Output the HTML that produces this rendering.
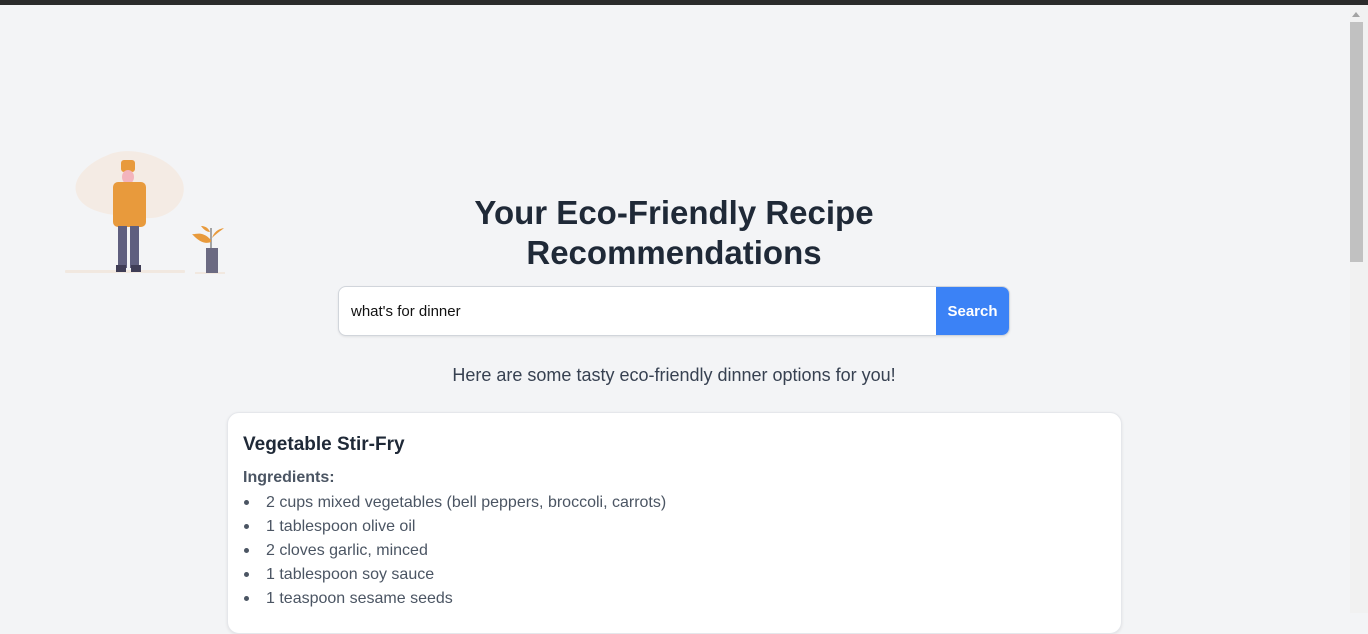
<!DOCTYPE html>
<html><head><meta charset="utf-8"><style>
body{margin:0;width:1368px;height:613px;overflow:hidden;background:#f3f4f6;font-family:"Liberation Sans",sans-serif;position:relative}
.top{position:absolute;left:0;top:0;width:1368px;height:5px;background:#2b2b2b}
.sb{position:absolute;right:0;top:5px;width:18px;height:608px;background:#f1f1f1}
.thumb{position:absolute;left:1350px;top:22px;width:13px;height:240px;background:#c1c1c1}
.arrow{position:absolute;left:1352px;top:12px;width:0;height:0;border-left:4px solid transparent;border-right:4px solid transparent;border-bottom:5px solid #a3a3a3}
h1{position:absolute;left:300px;width:748px;top:193px;margin:0;text-align:center;font-size:33px;line-height:40px;font-weight:bold;color:#1f2937}
.search{position:absolute;left:338px;top:286px;width:670px;height:48px;border:1px solid #d1d5db;border-radius:8px;background:#fff;box-shadow:0 1px 2px rgba(0,0,0,.08);overflow:hidden}
.search span{position:absolute;left:12px;top:16px;font-size:15px;color:#111}
.btn{position:absolute;right:0;top:0;width:73px;height:48px;background:#3b82f6;color:#fff;font-weight:bold;font-size:15px;line-height:50px;text-align:center}
.sub{position:absolute;left:0;width:1348px;top:365px;text-align:center;font-size:18px;color:#374151}
.card{position:absolute;left:227px;top:412px;width:893px;height:220px;background:#fff;border:1px solid #e5e7eb;border-radius:12px;box-shadow:0 1px 3px rgba(0,0,0,.08)}
.card h2{position:absolute;left:15px;top:21px;margin:0;font-size:19px;font-weight:bold;color:#1f2937}
.ing{position:absolute;left:15px;top:56px;font-size:16px;font-weight:bold;color:#4b5563}
ul{position:absolute;left:15px;top:78px;margin:0;padding:0;list-style:none;font-size:16px;color:#4b5563}
li{height:24px;line-height:24px;padding-left:23px;position:relative}
li:before{content:"";position:absolute;left:1px;top:9px;width:5px;height:5px;border-radius:50%;background:#4b5563}
</style></head><body>
<div class="top"></div>
<div class="sb"></div><div class="arrow"></div><div class="thumb"></div>
<svg style="position:absolute;left:60px;top:140px" width="180" height="140" viewBox="0 0 180 140">
<path d="M48 15 C70 5 110 15 122 40 C130 60 110 80 85 78 C60 76 25 75 17 55 C10 38 30 22 48 15Z" fill="#f4ebe4"/>
<rect x="5" y="130" width="120" height="3" fill="#f1e8e0" rx="1"/>
<rect x="135" y="132" width="30" height="2" fill="#f1e8e0"/>
<rect x="61" y="20" width="14" height="12" rx="3" fill="#e89a3c"/>
<ellipse cx="68" cy="37" rx="6" ry="7" fill="#f3b4bd"/>
<rect x="53" y="42" width="33" height="45" rx="5" fill="#e89a3c"/>
<rect x="58" y="86" width="9" height="42" fill="#5f5f7f"/><rect x="70" y="86" width="9" height="42" fill="#5f5f7f"/>
<rect x="56" y="125" width="10" height="7" fill="#3f3d56"/><rect x="71" y="125" width="10" height="7" fill="#3f3d56"/>
<rect x="146" y="108" width="12" height="25" fill="#6b6a82"/>
<path d="M151 108 V88" stroke="#888" stroke-width="1.5"/>
<path d="M151 100 C142 90 135 95 132 94 C140 103 146 104 151 102Z M152 98 C158 92 162 90 164 88 C158 89 154 92 152 98Z M150 92 C148 87 144 86 141 86 C144 90 147 92 150 92Z" fill="#e89a3c"/>
</svg>
<h1>Your Eco-Friendly Recipe<br>Recommendations</h1>
<div class="search"><span>what's for dinner</span><div class="btn">Search</div></div>
<div class="sub">Here are some tasty eco-friendly dinner options for you!</div>
<div class="card"><h2>Vegetable Stir-Fry</h2><div class="ing">Ingredients:</div>
<ul><li>2 cups mixed vegetables (bell peppers, broccoli, carrots)</li><li>1 tablespoon olive oil</li><li>2 cloves garlic, minced</li><li>1 tablespoon soy sauce</li><li>1 teaspoon sesame seeds</li></ul></div>
</body></html>
